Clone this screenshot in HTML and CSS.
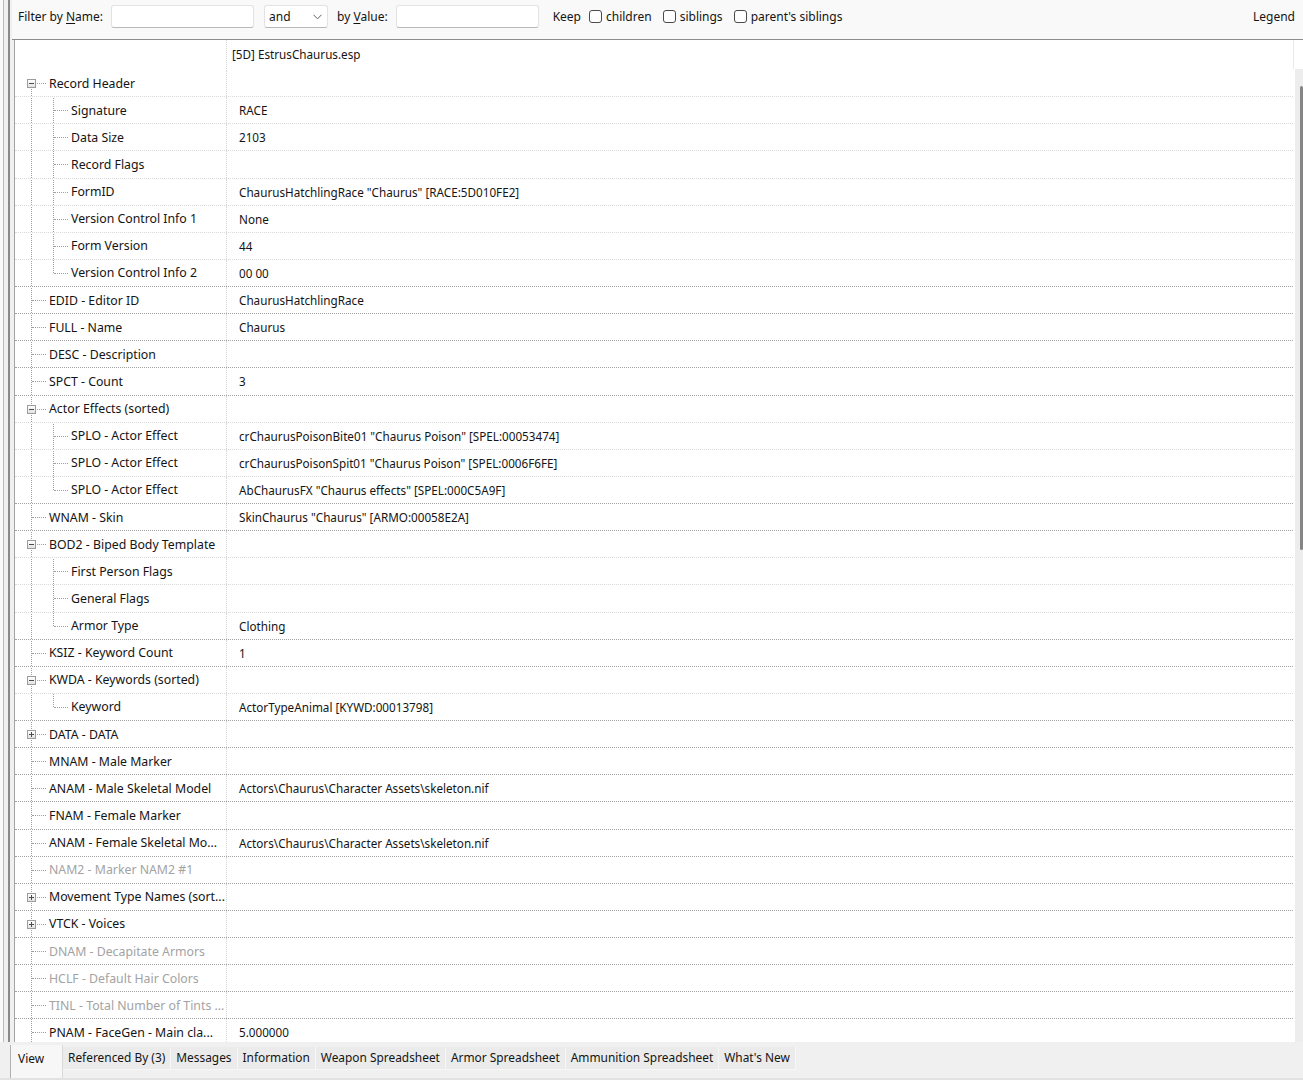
FILE: index.html
```html
<!DOCTYPE html>
<html lang="en">
<head>
    <meta charset="UTF-8">
    <title>Record View - RACE</title>
    <link rel="stylesheet" href="styles.css">
</head>
<body>
    <div class="window">
        <div class="top-area">
            <div class="side"></div>
            <div class="main">
                <div class="toolbar">
                    <label class="lbl">Filter by <u>N</u>ame:</label>
                    <input class="field" type="text">
                    <div class="combo"><span>and</span><svg width="9" height="6" viewBox="0 0 9 6"><path d="M0.5 0.8 L4.5 4.8 L8.5 0.8" fill="none" stroke="#606060" stroke-width="1"/></svg></div>
                    <label class="lbl">by <u>V</u>alue:</label>
                    <input class="field" type="text">
                    <span class="lbl keep">Keep</span>
                    <label class="check"><span class="box"></span>children</label>
                    <label class="check"><span class="box"></span>siblings</label>
                    <label class="check"><span class="box"></span>parent's siblings</label>
                    <span class="legend">Legend</span>
                </div>

                <div class="tree">
                    <div class="tree-head">
                        <div class="hname"></div>
                        <div class="hval">[5D] EstrusChaurus.esp</div>
                        <div class="hcorner"></div>
                    </div>
                    <div class="tree-body">
                        <div class="rows">
                            <div class="row first">
                                <div class="name"><span class="g node first"><i class="minus"></i></span><span class="label">Record Header</span></div>
                                <div class="val"></div>
                            </div>
                            <div class="row">
                                <div class="name"><span class="g pipe"></span><span class="g tee"></span><span class="label">Signature</span></div>
                                <div class="val">RACE</div>
                            </div>
                            <div class="row">
                                <div class="name"><span class="g pipe"></span><span class="g tee"></span><span class="label">Data Size</span></div>
                                <div class="val">2103</div>
                            </div>
                            <div class="row">
                                <div class="name"><span class="g pipe"></span><span class="g tee"></span><span class="label">Record Flags</span></div>
                                <div class="val"></div>
                            </div>
                            <div class="row">
                                <div class="name"><span class="g pipe"></span><span class="g tee"></span><span class="label">FormID</span></div>
                                <div class="val">ChaurusHatchlingRace "Chaurus" [RACE:5D010FE2]</div>
                            </div>
                            <div class="row">
                                <div class="name"><span class="g pipe"></span><span class="g tee"></span><span class="label">Version Control Info 1</span></div>
                                <div class="val">None</div>
                            </div>
                            <div class="row">
                                <div class="name"><span class="g pipe"></span><span class="g tee"></span><span class="label">Form Version</span></div>
                                <div class="val">44</div>
                            </div>
                            <div class="row">
                                <div class="name"><span class="g pipe"></span><span class="g ell"></span><span class="label">Version Control Info 2</span></div>
                                <div class="val">00 00</div>
                            </div>
                            <div class="row top">
                                <div class="name"><span class="g tee"></span><span class="label">EDID - Editor ID</span></div>
                                <div class="val">ChaurusHatchlingRace</div>
                            </div>
                            <div class="row top">
                                <div class="name"><span class="g tee"></span><span class="label">FULL - Name</span></div>
                                <div class="val">Chaurus</div>
                            </div>
                            <div class="row top">
                                <div class="name"><span class="g tee"></span><span class="label">DESC - Description</span></div>
                                <div class="val"></div>
                            </div>
                            <div class="row top">
                                <div class="name"><span class="g tee"></span><span class="label">SPCT - Count</span></div>
                                <div class="val">3</div>
                            </div>
                            <div class="row top">
                                <div class="name"><span class="g node"><i class="minus"></i></span><span class="label">Actor Effects (sorted)</span></div>
                                <div class="val"></div>
                            </div>
                            <div class="row">
                                <div class="name"><span class="g pipe"></span><span class="g tee"></span><span class="label">SPLO - Actor Effect</span></div>
                                <div class="val">crChaurusPoisonBite01 "Chaurus Poison" [SPEL:00053474]</div>
                            </div>
                            <div class="row">
                                <div class="name"><span class="g pipe"></span><span class="g tee"></span><span class="label">SPLO - Actor Effect</span></div>
                                <div class="val">crChaurusPoisonSpit01 "Chaurus Poison" [SPEL:0006F6FE]</div>
                            </div>
                            <div class="row">
                                <div class="name"><span class="g pipe"></span><span class="g ell"></span><span class="label">SPLO - Actor Effect</span></div>
                                <div class="val">AbChaurusFX "Chaurus effects" [SPEL:000C5A9F]</div>
                            </div>
                            <div class="row top">
                                <div class="name"><span class="g tee"></span><span class="label">WNAM - Skin</span></div>
                                <div class="val">SkinChaurus "Chaurus" [ARMO:00058E2A]</div>
                            </div>
                            <div class="row top">
                                <div class="name"><span class="g node"><i class="minus"></i></span><span class="label">BOD2 - Biped Body Template</span></div>
                                <div class="val"></div>
                            </div>
                            <div class="row">
                                <div class="name"><span class="g pipe"></span><span class="g tee"></span><span class="label">First Person Flags</span></div>
                                <div class="val"></div>
                            </div>
                            <div class="row">
                                <div class="name"><span class="g pipe"></span><span class="g tee"></span><span class="label">General Flags</span></div>
                                <div class="val"></div>
                            </div>
                            <div class="row">
                                <div class="name"><span class="g pipe"></span><span class="g ell"></span><span class="label">Armor Type</span></div>
                                <div class="val">Clothing</div>
                            </div>
                            <div class="row top">
                                <div class="name"><span class="g tee"></span><span class="label">KSIZ - Keyword Count</span></div>
                                <div class="val">1</div>
                            </div>
                            <div class="row top">
                                <div class="name"><span class="g node"><i class="minus"></i></span><span class="label">KWDA - Keywords (sorted)</span></div>
                                <div class="val"></div>
                            </div>
                            <div class="row">
                                <div class="name"><span class="g pipe"></span><span class="g ell"></span><span class="label">Keyword</span></div>
                                <div class="val">ActorTypeAnimal [KYWD:00013798]</div>
                            </div>
                            <div class="row top">
                                <div class="name"><span class="g node"><i class="plus"></i></span><span class="label">DATA - DATA</span></div>
                                <div class="val"></div>
                            </div>
                            <div class="row top">
                                <div class="name"><span class="g tee"></span><span class="label">MNAM - Male Marker</span></div>
                                <div class="val"></div>
                            </div>
                            <div class="row top">
                                <div class="name"><span class="g tee"></span><span class="label">ANAM - Male Skeletal Model</span></div>
                                <div class="val">Actors\Chaurus\Character Assets\skeleton.nif</div>
                            </div>
                            <div class="row top">
                                <div class="name"><span class="g tee"></span><span class="label">FNAM - Female Marker</span></div>
                                <div class="val"></div>
                            </div>
                            <div class="row top">
                                <div class="name"><span class="g tee"></span><span class="label">ANAM - Female Skeletal Mo...</span></div>
                                <div class="val">Actors\Chaurus\Character Assets\skeleton.nif</div>
                            </div>
                            <div class="row top empty">
                                <div class="name"><span class="g tee"></span><span class="label">NAM2 - Marker NAM2 #1</span></div>
                                <div class="val"></div>
                            </div>
                            <div class="row top">
                                <div class="name"><span class="g node"><i class="plus"></i></span><span class="label">Movement Type Names (sort...</span></div>
                                <div class="val"></div>
                            </div>
                            <div class="row top">
                                <div class="name"><span class="g node"><i class="plus"></i></span><span class="label">VTCK - Voices</span></div>
                                <div class="val"></div>
                            </div>
                            <div class="row top empty">
                                <div class="name"><span class="g tee"></span><span class="label">DNAM - Decapitate Armors</span></div>
                                <div class="val"></div>
                            </div>
                            <div class="row top empty">
                                <div class="name"><span class="g tee"></span><span class="label">HCLF - Default Hair Colors</span></div>
                                <div class="val"></div>
                            </div>
                            <div class="row top empty">
                                <div class="name"><span class="g tee"></span><span class="label">TINL - Total Number of Tints ...</span></div>
                                <div class="val"></div>
                            </div>
                            <div class="row top">
                                <div class="name"><span class="g tee"></span><span class="label">PNAM - FaceGen - Main cla...</span></div>
                                <div class="val">5.000000</div>
                            </div>
                        </div>
                        <div class="scroll"><div class="thumb"></div></div>
                    </div>
                </div>
            </div>
        </div>

        <div class="tabbar">
            <span class="tab active">View</span>
            <span class="tab">Referenced By (3)</span>
            <span class="tab">Messages</span>
            <span class="tab">Information</span>
            <span class="tab">Weapon Spreadsheet</span>
            <span class="tab">Armor Spreadsheet</span>
            <span class="tab">Ammunition Spreadsheet</span>
            <span class="tab">What's New</span>
        </div>
    </div>
</body>
</html>
```

FILE: styles.css
```css
body {
    margin: 0;
    padding: 0;
    background-color: #f0f0f0;
    font-family: "Segoe UI", "Noto Sans", sans-serif;
    font-size: 12.3px;
    color: #141414;
    overflow: hidden;
}
.window {
    width: 1303px;
    height: 1080px;
    display: flex;
    flex-direction: column;
}
.top-area {
    height: 1042px;
    display: flex;
}
.side {
    width: 12px;
    flex: none;
    background: linear-gradient(to right, #fafafa 0, #fafafa 3px, #bdbdbd 3px, #bdbdbd 4px, #f0f0f0 4px, #f0f0f0 8px, #8a8a8a 8px, #8a8a8a 10px, #f0f0f0 10px);
}
.main {
    flex: 1;
    display: flex;
    flex-direction: column;
    min-width: 0;
}

/* filter bar */
.toolbar {
    height: 40px;
    box-sizing: border-box;
    flex: none;
    display: flex;
    align-items: center;
    padding: 0 0 6px 6px;
    font-size: 12px;
    background-color: #f9f9f9;
    border-bottom: 1px solid #8c8c8c;
    white-space: nowrap;
}
.lbl u {
    text-decoration: underline;
    text-underline-offset: 2px;
}
.field {
    width: 143px;
    height: 23px;
    box-sizing: border-box;
    margin: 0 10px 0 8px;
    border: 1px solid #e3e3e3;
    border-bottom-color: #b9b9b9;
    border-radius: 3px;
    background: #fff;
    outline: none;
}
.combo {
    width: 64px;
    height: 23px;
    box-sizing: border-box;
    margin-right: 9px;
    padding: 0 4px;
    display: flex;
    align-items: center;
    justify-content: space-between;
    border: 1px solid #e3e3e3;
    border-bottom-color: #b9b9b9;
    border-radius: 3px;
    background: #fff;
}
.combo svg {
    margin-right: 1px;
}
.keep {
    margin-left: 4px;
    margin-right: 8px;
}
.check {
    display: flex;
    align-items: center;
    margin-right: 11px;
}
.check .box {
    width: 13px;
    height: 13px;
    box-sizing: border-box;
    margin-right: 4px;
    border: 1px solid #4a4a4a;
    border-radius: 3px;
    background: #fff;
}
.legend {
    margin-left: auto;
    margin-right: 8px;
}

/* record tree */
.tree {
    flex: 1;
    display: flex;
    flex-direction: column;
    margin-left: 2px;
    border-left: 1px solid #a3a3a3;
    background: #fff;
    min-height: 0;
}
.tree-head {
    height: 29px;
    flex: none;
    display: flex;
}
.hname {
    width: 212px;
    box-sizing: border-box;
    border-right: 1px dotted #d6d6d6;
}
.hval {
    flex: 1;
    padding-left: 5px;
    font-size: 11.7px;
    line-height: 29px;
}
.hcorner {
    width: 9px;
    border-left: 1px solid #e9e9e9;
}
.tree-body {
    flex: 1;
    display: flex;
    min-height: 0;
    overflow: hidden;
}
.rows {
    flex: 1;
    min-width: 0;
}
.row {
    height: 27.14px;
    box-sizing: border-box;
    display: flex;
    border-top: 1px dotted #d9d9d9;
}
.row.first {
    border-top-color: transparent;
}
.row.top {
    border-top-color: #a2a2a2;
}
.name {
    width: 212px;
    flex: none;
    box-sizing: border-box;
    padding-left: 5px;
    display: flex;
    align-items: center;
    border-right: 1px dotted #d6d6d6;
    white-space: nowrap;
    overflow: hidden;
}
.label {
    margin-left: 7px;
}
.row.empty .label {
    color: #a3a3a3;
}
.val {
    flex: 1;
    padding-left: 12px;
    display: flex;
    align-items: center;
    font-size: 11.7px;
    white-space: nowrap;
}

/* tree guide lines */
.g {
    position: relative;
    width: 22px;
    height: 100%;
    flex: none;
}
.g::before {
    content: '';
    position: absolute;
    left: 11px;
    top: -1px;
    bottom: 0;
    border-left: 1px dotted #a0a0a0;
}
.g::after {
    content: '';
    position: absolute;
    left: 12px;
    right: -4px;
    top: 50%;
    border-top: 1px dotted #a0a0a0;
}
.g.pipe::after {
    display: none;
}
.g.ell::before {
    bottom: 50%;
}
.g.node.first::before {
    top: 50%;
}
.g.node i {
    position: absolute;
    z-index: 1;
    left: 7px;
    top: 50%;
    width: 9px;
    height: 9px;
    margin-top: -4px;
    box-sizing: border-box;
    border: 1px solid #9c9c9c;
    background: linear-gradient(#ffffff, #e2e2e2);
}
.g.node i::before {
    content: '';
    position: absolute;
    left: 1px;
    top: 3px;
    width: 5px;
    height: 1px;
    background: #4d4d4d;
}
.g.node i.plus::after {
    content: '';
    position: absolute;
    left: 3px;
    top: 1px;
    width: 1px;
    height: 5px;
    background: #4d4d4d;
}

.scroll {
    width: 8px;
    flex: none;
    background: #ededed;
    border-left: 2px solid #fff;
}
.thumb {
    width: 3px;
    height: 464px;
    margin: 17px 0 0 5px;
    border-radius: 2px;
    background: #858585;
}

/* bottom tabs */
.tabbar {
    height: 38px;
    box-sizing: border-box;
    display: flex;
    align-items: flex-start;
    padding: 3px 0 0 10px;
    font-size: 11.9px;
    background: #f0f0f0;
    border-bottom: 2px solid #e2e2e2;
    white-space: nowrap;
}
.tab {
    height: 23px;
    box-sizing: border-box;
    margin-top: 2px;
    padding: 0 5px;
    line-height: 21px;
    background: #ebebeb;
    border-right: 1px solid #f7f7f7;
    border-bottom: 1px solid #f7f7f7;
}
.tab.active {
    width: 53px;
    height: 33px;
    margin-top: 0;
    padding: 3px 0 0 7px;
    background: #f7f7f7;
    border-left: 1px solid #b0b0b0;
    border-right: 1px solid #d9d9d9;
    border-bottom: none;
}
```
